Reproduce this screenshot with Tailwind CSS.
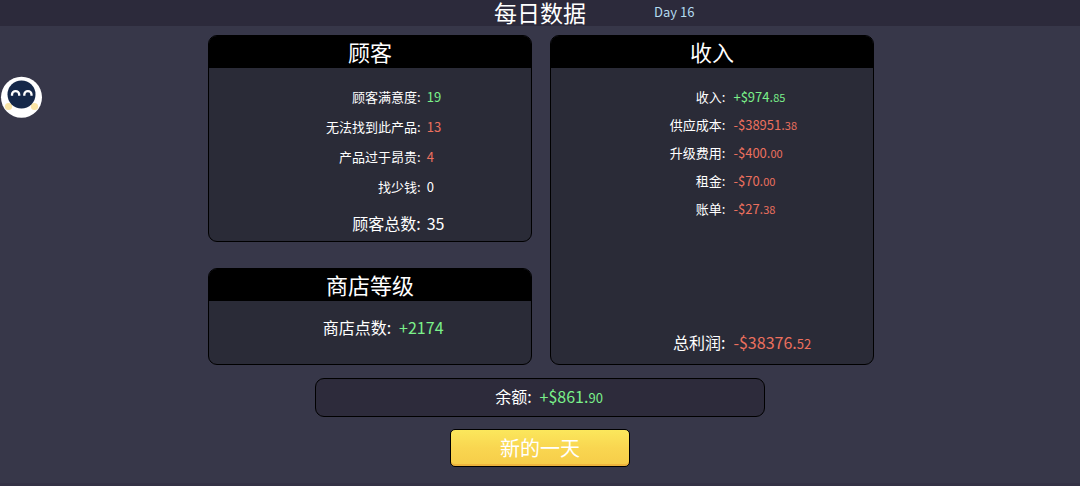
<!DOCTYPE html>
<html lang="zh-CN">

<head>
    <meta charset="UTF-8">
    <meta name="viewport" content="width=device-width, initial-scale=1">
    <title>每日数据</title>
    <script src="https://cdn.jsdelivr.net/npm/@tailwindcss/browser@4"></script>
</head>

<body class="min-h-screen flex flex-col bg-[#373749] text-white font-['Noto_Sans_CJK_SC',sans-serif]">
    <!-- Top bar -->
    <header class="grid grid-cols-[1fr_auto_1fr] items-center gap-[68px] bg-[#2c2a3b] pb-[2px] leading-[24px]">
        <h1 class="col-start-2 text-[23px]">每日数据</h1>
        <p class="text-[13px] text-[#b4dcf0]">Day 16</p>
    </header>

    <!-- Assistant -->
    <button type="button" aria-label="助手" class="fixed left-0 top-[76px]">
        <svg class="w-[43px] h-[43px]" viewBox="0 0 43 43">
            <circle cx="21.5" cy="21.3" r="20.5" fill="#fff" />
            <circle cx="8.5" cy="30.5" r="3.6" fill="#fae5a6" />
            <circle cx="34.5" cy="30.5" r="3.6" fill="#fae5a6" />
            <circle cx="21.5" cy="18.5" r="14" fill="#152849" />
            <path d="M12 19.8v-1.3a3.6 3.4 0 0 1 7.2 0v1.3M24.3 19.8v-1.3a3.6 3.4 0 0 1 7.2 0v1.3" fill="none" stroke="#fff" stroke-width="2.3" />
        </svg>
    </button>

    <main class="w-full max-w-[668px] mx-auto pt-[9px] flex-1">
        <div class="grid grid-cols-2 gap-[18px] pl-[2px]">
            <div class="flex flex-col gap-[26px]">
                <!-- Customers -->
                <section class="rounded-[9px] border border-black bg-[#2a2b37] overflow-hidden">
                    <h2 class="bg-black pb-[2px] text-center text-[22px] leading-[30px]">顾客</h2>
                    <dl class="grid grid-cols-[67fr_33fr] gap-x-[6px] pt-[14px] pb-[3px] text-[13px] leading-[30px]">
                        <dt class="text-right">顾客满意度:</dt>
                        <dd class="text-[#7bf08a]">19</dd>
                        <dt class="text-right">无法找到此产品:</dt>
                        <dd class="text-[#ec705e]">13</dd>
                        <dt class="text-right">产品过于昂贵:</dt>
                        <dd class="text-[#ec705e]">4</dd>
                        <dt class="text-right">找少钱:</dt>
                        <dd>0</dd>
                        <dt class="text-right text-[16px] pt-[6px]">顾客总数:</dt>
                        <dd class="text-[16px] pt-[6px]">35</dd>
                    </dl>
                </section>

                <!-- Store level -->
                <section class="flex-1 rounded-[9px] border border-black bg-[#2a2b37] overflow-hidden">
                    <h2 class="bg-black pb-[2px] text-center text-[22px] leading-[30px]">商店等级</h2>
                    <dl class="grid grid-cols-[58fr_42fr] gap-x-[8px] pt-[11px] pb-[22px] text-[16px] leading-[30px]">
                        <dt class="text-right">商店点数:</dt>
                        <dd class="text-[#7bf08a]">+2174</dd>
                    </dl>
                </section>
            </div>

            <!-- Income -->
            <section class="flex flex-col rounded-[9px] border border-black bg-[#2a2b37] overflow-hidden">
                <h2 class="bg-black pb-[2px] text-center text-[22px] leading-[30px]">收入</h2>
                <dl class="grid grid-cols-[5fr_4fr] gap-x-[8px] pt-[15px] text-[13px] leading-[28px]">
                    <dt class="text-right">收入:</dt>
                    <dd class="text-[#7bf08a]">+$974.<span class="text-[11px]">85</span></dd>
                    <dt class="text-right">供应成本:</dt>
                    <dd class="text-[#ec705e]">-$38951.<span class="text-[11px]">38</span></dd>
                    <dt class="text-right">升级费用:</dt>
                    <dd class="text-[#ec705e]">-$400.<span class="text-[11px]">00</span></dd>
                    <dt class="text-right">租金:</dt>
                    <dd class="text-[#ec705e]">-$70.<span class="text-[11px]">00</span></dd>
                    <dt class="text-right">账单:</dt>
                    <dd class="text-[#ec705e]">-$27.<span class="text-[11px]">38</span></dd>
                </dl>
                <dl class="mt-auto grid grid-cols-[5fr_4fr] gap-x-[8px] pb-[5px] text-[16px] leading-[30px]">
                    <dt class="text-right">总利润:</dt>
                    <dd class="text-[#ec705e]">-$38376.<span class="text-[13px]">52</span></dd>
                </dl>
            </section>
        </div>

        <!-- Balance -->
        <dl class="max-w-[450px] mx-auto mt-[13px] pb-[1px] grid grid-cols-[49fr_51fr] gap-x-[8px] rounded-[9px] border border-black bg-[#2d2b3b] text-[16px] leading-[34px]">
            <dt class="text-right">余额:</dt>
            <dd class="text-[#7bf08a]">+$861.<span class="text-[13px]">90</span></dd>
        </dl>

        <button type="button"
            class="block w-[180px] mx-auto mt-[12px] rounded-[5px] border border-black bg-linear-to-b from-[#fbe75c] via-[#f9d650] to-[#f6cc49] shadow-[inset_0_-2px_0_#eeb43c] text-[20px] leading-[36px] cursor-pointer hover:brightness-105">
            新的一天
        </button>
    </main>

    <footer class="h-[3px] bg-[#343245]"></footer>
</body>

</html>
